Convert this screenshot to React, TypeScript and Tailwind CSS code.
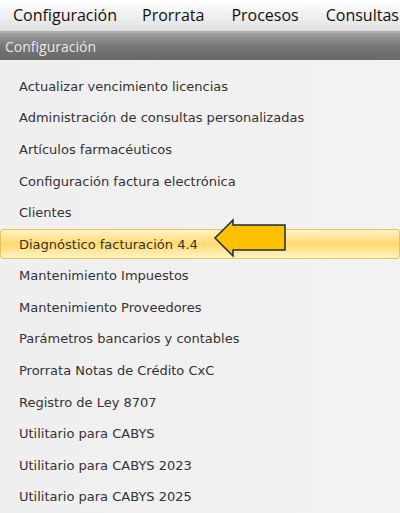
import React from "react";

const items = [
  "Actualizar vencimiento licencias",
  "Administración de consultas personalizadas",
  "Artículos farmacéuticos",
  "Configuración factura electrónica",
  "Clientes",
  "Diagnóstico facturación 4.4",
  "Mantenimiento Impuestos",
  "Mantenimiento Proveedores",
  "Parámetros bancarios y contables",
  "Prorrata Notas de Crédito CxC",
  "Registro de Ley 8707",
  "Utilitario para CABYS",
  "Utilitario para CABYS 2023",
  "Utilitario para CABYS 2025",
];

export default function App() {
  return (
    <div className="w-[400px] h-[513px] overflow-hidden bg-[#eeeeee] flex flex-col" style={{ fontFamily: "'DejaVu Sans', sans-serif" }}>
      <div className="h-[32px] flex items-center bg-gradient-to-b from-[#ffffff] to-[#e0e0e0] text-[16px] text-[#111] whitespace-nowrap overflow-hidden" style={{ fontFamily: "'Open Sans', 'Liberation Sans', sans-serif" }}>
        <span className="ml-[13px]">Configuración</span>
        <span className="ml-[25px]">Prorrata</span>
        <span className="ml-[27px]">Procesos</span>
        <span className="ml-[27px]">Consultas</span>
      </div>
      <div className="h-[2px] bg-[#b0b0b0]" />
      <div className="h-[28px] flex items-center bg-gradient-to-b from-[#a0a0a0] via-[#767676] to-[#686868] text-[14px] text-[#e8e8e8] pl-[5px]" style={{ fontFamily: "'Open Sans', 'Liberation Sans', sans-serif" }}>
        Configuración
      </div>
      <div className="flex flex-col pt-[11px] bg-gradient-to-r from-[#efefef] to-[#f2f2f2] flex-1">
        {items.map((t, i) => {
          const hl = i === 5;
          return (
            <div key={t} className="h-[31.6px] flex items-center relative">
              {hl && (
                <div className="absolute left-0 right-0 top-[0px] bottom-[1px] rounded-[3px] border border-[#e6c45c] bg-gradient-to-b from-[#fff3c4] via-[#ffd96b] to-[#fff3c4]" />
              )}
              <span className="relative ml-[19px] text-[13px] text-[#333] whitespace-nowrap">{t}</span>
              {hl && (
                <svg className="absolute left-[213px] top-[-11px]" width="76" height="42" viewBox="0 0 76 42">
                  <polygon points="2,20 20,2 20,7 72,7 72,32 20,32 20,38" fill="#ffc000" stroke="#1d2a44" strokeWidth="1.5" strokeLinejoin="miter" />
                </svg>
              )}
            </div>
          );
        })}
      </div>
    </div>
  );
}
